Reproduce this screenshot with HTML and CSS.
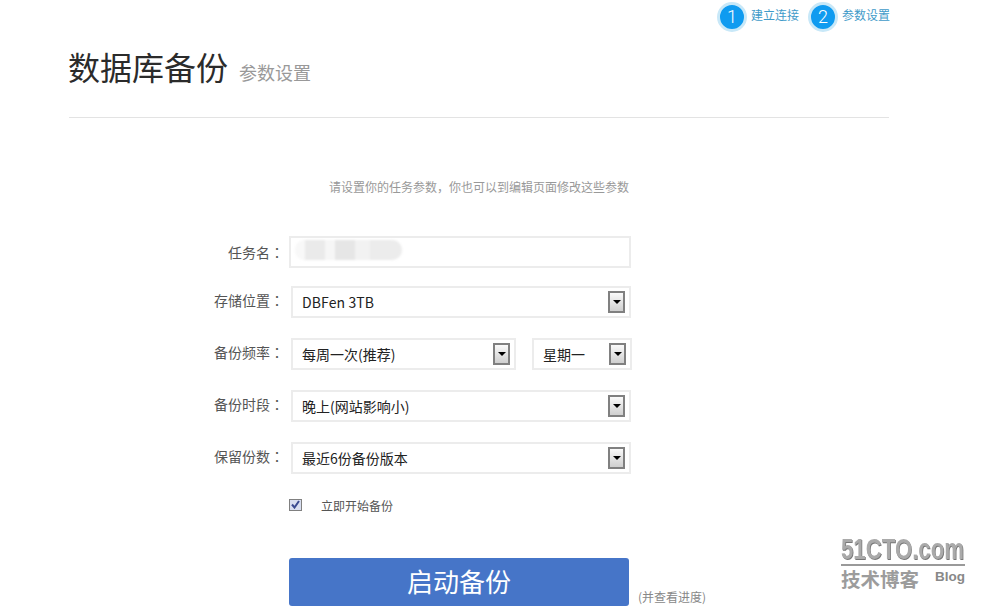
FILE: index.html
```html
<!DOCTYPE html>
<html lang="zh-CN">
<head>
<meta charset="utf-8">
<title>数据库备份</title>
<link rel="stylesheet" href="styles.css">
</head>
<body>
<div class="page">
  <ol class="steps">
    <li class="step"><span class="step-num">1</span><span class="step-text">建立连接</span></li>
    <li class="step"><span class="step-num">2</span><span class="step-text">参数设置</span></li>
  </ol>
  <header class="head">
    <h1 class="title">数据库备份</h1>
    <span class="subtitle">参数设置</span>
  </header>
  <p class="note">请设置你的任务参数，你也可以到编辑页面修改这些参数</p>
  <form class="form">
    <div class="row row-name">
      <label class="label">任务名<span class="colon">：</span></label>
      <div class="input"><div class="blur"><i class="b1"></i><i class="b2"></i><i class="b3"></i><i class="b4"></i><i class="b5"></i><i class="b6"></i></div></div>
    </div>
    <div class="row">
      <label class="label">存储位置<span class="colon">：</span></label>
      <div class="select full"><span class="latin">DBFen 3TB</span><span class="arrow"></span></div>
    </div>
    <div class="row">
      <label class="label">备份频率<span class="colon">：</span></label>
      <div class="select freq"><span>每周一次(推荐)</span><span class="arrow"></span></div>
      <div class="select day"><span>星期一</span><span class="arrow"></span></div>
    </div>
    <div class="row">
      <label class="label">备份时段<span class="colon">：</span></label>
      <div class="select full"><span>晚上(网站影响小)</span><span class="arrow"></span></div>
    </div>
    <div class="row">
      <label class="label">保留份数<span class="colon">：</span></label>
      <div class="select full"><span>最近6份备份版本</span><span class="arrow"></span></div>
    </div>
    <div class="check-row">
      <span class="check"><svg width="9" height="9" viewBox="0 0 9 9"><path d="M1 4.5 L3.5 7.5 L8 1" fill="none" stroke="#3a4a90" stroke-width="2"/></svg></span>
      <span class="check-text">立即开始备份</span>
    </div>
    <div class="submit-row">
      <button class="submit" type="button">启动备份</button>
      <span class="hint">(并查看进度)</span>
    </div>
  </form>
  <div class="mark">
    <div class="mark-top"><span class="mark-logo">51CTO.com</span></div>
    <div class="mark-bottom"><span class="mark-cn">技术博客</span><span class="mark-blog">Blog</span></div>
  </div>
</div>
</body>
</html>
```
FILE: styles.css
```css
* { box-sizing: border-box; }
html, body { margin: 0; padding: 0; background: #fff; }
body { font-family: "Noto Sans CJK SC", "Noto Sans", sans-serif; color: #333; }
.page { position: relative; width: 983px; height: 609px; overflow: hidden; padding-left: 69px; }

.steps { list-style: none; margin: 0; padding: 2px 0 0; width: 821px; height: 34px; display: flex; justify-content: flex-end; gap: 9px; }
.step { display: flex; align-items: center; gap: 4px; height: 30px; }
.step-num { width: 30px; height: 30px; border-radius: 50%; background: #0f9bf0; border: 3px solid #c8e8f8; color: #fff; font: 300 18px/24px Roboto, sans-serif; text-align: center; }
.step-text { font-size: 12px; color: #3f9bc9; line-height: 28px; margin-top: -4px; }

.head { width: 820px; height: 84px; border-bottom: 1px solid #e3e3e3; display: flex; align-items: baseline; gap: 11px; padding-top: 8px; }
.title { margin: 0 0 0 -1px; font-size: 32px; font-weight: 400; line-height: 48px; color: #2b2b2b; }
.subtitle { font-size: 18px; color: #999; }

.note { margin: 0; padding: 60px 0 0 260px; font-size: 12px; line-height: 18px; color: #999; }

.form { margin-top: 40px; padding-left: 145px; }
.row { display: flex; height: 32px; margin-bottom: 20px; align-items: center; }
.row-name { margin-bottom: 18px; }
.label { width: 70px; font-size: 14px; text-align: right; color: #555; margin-right: 5px; padding-bottom: 5px; white-space: nowrap; }
.row-name .label { padding-bottom: 1px; }
.colon { font-family: "Noto Sans CJK TC", sans-serif; font-feature-settings: "locl" 0; }
.input { width: 342px; height: 32px; border: 2px solid #ececec; padding: 2px 0 0 4px; }
.blur { display: flex; width: 107px; height: 20px; border-radius: 10px; overflow: hidden; filter: blur(1px); background: #f3f3f3; }
.blur i { display: block; height: 100%; }
.b1 { width: 10px; background: #f8f8f8; }
.b2 { width: 20px; background: #eaeaea; }
.b3 { width: 10px; background: #f6f6f6; }
.b4 { width: 20px; background: #e6e6e6; }
.b5 { width: 15px; background: #f2f2f2; }
.b6 { width: 32px; background: #ececec; }

.select { height: 32px; border: 2px solid #ececec; margin-left: 2px; padding: 0 4px 0 9px; display: flex; align-items: center; justify-content: space-between; font-size: 14px; color: #222; }
.full { width: 340px; }
.freq { width: 225px; }
.day { width: 100px; margin-left: 16px; }
.latin { letter-spacing: .1px; }
.arrow { position: relative; width: 17px; height: 22px; border: 2px solid #808080; background: linear-gradient(#fafafa, #cfcfcf); }
.arrow::after { content: ""; position: absolute; left: 3px; top: 7px; border: 4px solid transparent; border-top: 4px solid #000; border-bottom: 0; }

.check-row { display: flex; align-items: center; height: 18px; margin-left: 75px; margin-top: 22px; }
.check { width: 13px; height: 12px; border: 1px solid #808080; background: #d8def0; display: flex; align-items: center; justify-content: center; margin-top: -1px; }
.check-text { font-size: 12px; color: #555; margin-left: 19px; }

.submit-row { display: flex; align-items: flex-end; margin: 44px 0 0 75px; }
.submit { width: 340px; height: 48px; border: 0; border-radius: 3px; background: #4675c8; color: #fff; font: 400 26px "Noto Sans CJK SC", sans-serif; padding: 0 0 3px; }
.hint { font-size: 12px; color: #888; margin: 0 0 1px 9px; line-height: 16px; }

.mark { position: absolute; left: 841px; top: 534px; width: 124px; color: #a8a8a8; }
.mark-top { height: 32px; border-bottom: 2px solid #9a9a9a; white-space: nowrap; }
.mark-logo { display: block; width: 124px; font: 700 30px/30px "Liberation Sans", sans-serif; color: #aaa; text-shadow: 1px 1px 0 #777; transform: scaleX(.74); transform-origin: left center; }
.mark-bottom { display: flex; justify-content: space-between; }
.mark-cn { font-size: 19.5px; font-weight: 700; line-height: 26px; color: #9c9c9c; }
.mark-blog { font: 700 13.5px/16px "Liberation Sans", sans-serif; color: #888; margin-top: 3px; }
```
